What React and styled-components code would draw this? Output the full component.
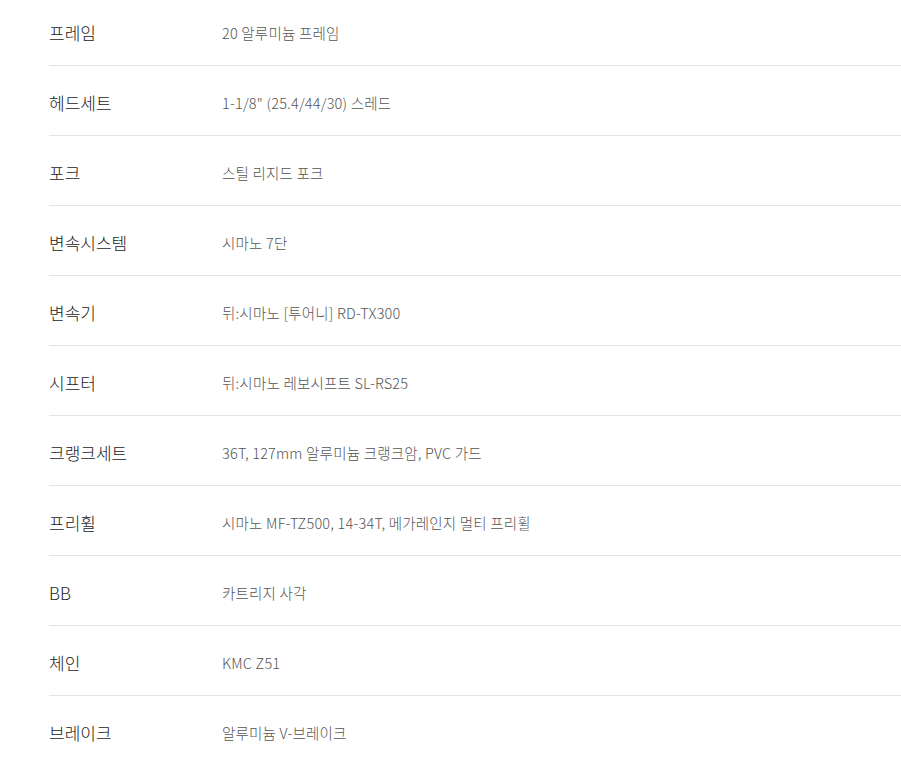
import styled, { createGlobalStyle } from "styled-components";

const specs = [
    ["프레임", "20 알루미늄 프레임"],
    ["헤드세트", "1-1/8\" (25.4/44/30) 스레드"],
    ["포크", "스틸 리지드 포크"],
    ["변속시스템", "시마노 7단"],
    ["변속기", "뒤:시마노 [투어니] RD-TX300"],
    ["시프터", "뒤:시마노 레보시프트 SL-RS25"],
    ["크랭크세트", "36T, 127mm 알루미늄 크랭크암, PVC 가드"],
    ["프리휠", "시마노 MF-TZ500, 14-34T, 메가레인지 멀티 프리휠"],
    ["BB", "카트리지 사각"],
    ["체인", "KMC Z51"],
    ["브레이크", "알루미늄 V-브레이크"],
];

const Global = createGlobalStyle`
    body {
        margin: 0;
        background: #fff;
        font-family: "Noto Sans CJK KR", "Noto Sans", sans-serif;
        overflow: hidden;
    }
`;

const App = () => {
    return <Wrap>
        <Global/>
        <SpecList>
            {specs.map(([label, value], i) => (
                <Row key={label} $last={i === specs.length - 1}>
                    <Label>{label}</Label>
                    <Value>{value}</Value>
                </Row>
            ))}
        </SpecList>
    </Wrap>;
};

const Wrap = styled.div`
    padding-left: 49px;
    margin-top: -4px;
`;

const SpecList = styled.dl`
    margin: 0;
`;

const Row = styled.div`
    display: grid;
    grid-template-columns: 173px 1fr;
    align-items: center;
    padding: 26px 0 21px;
    border-bottom: 1px solid ${(p) => (p.$last ? "transparent" : "#e5e5e5")};
`;

const Label = styled.dt`
    font-size: 17px;
    font-weight: 300;
    line-height: 22px;
    color: #1a1a1a;
`;

const Value = styled.dd`
    margin: 0;
    font-size: 14.5px;
    font-weight: 300;
    line-height: 22px;
    letter-spacing: 0.2px;
    color: #555;
`;

export default App;
